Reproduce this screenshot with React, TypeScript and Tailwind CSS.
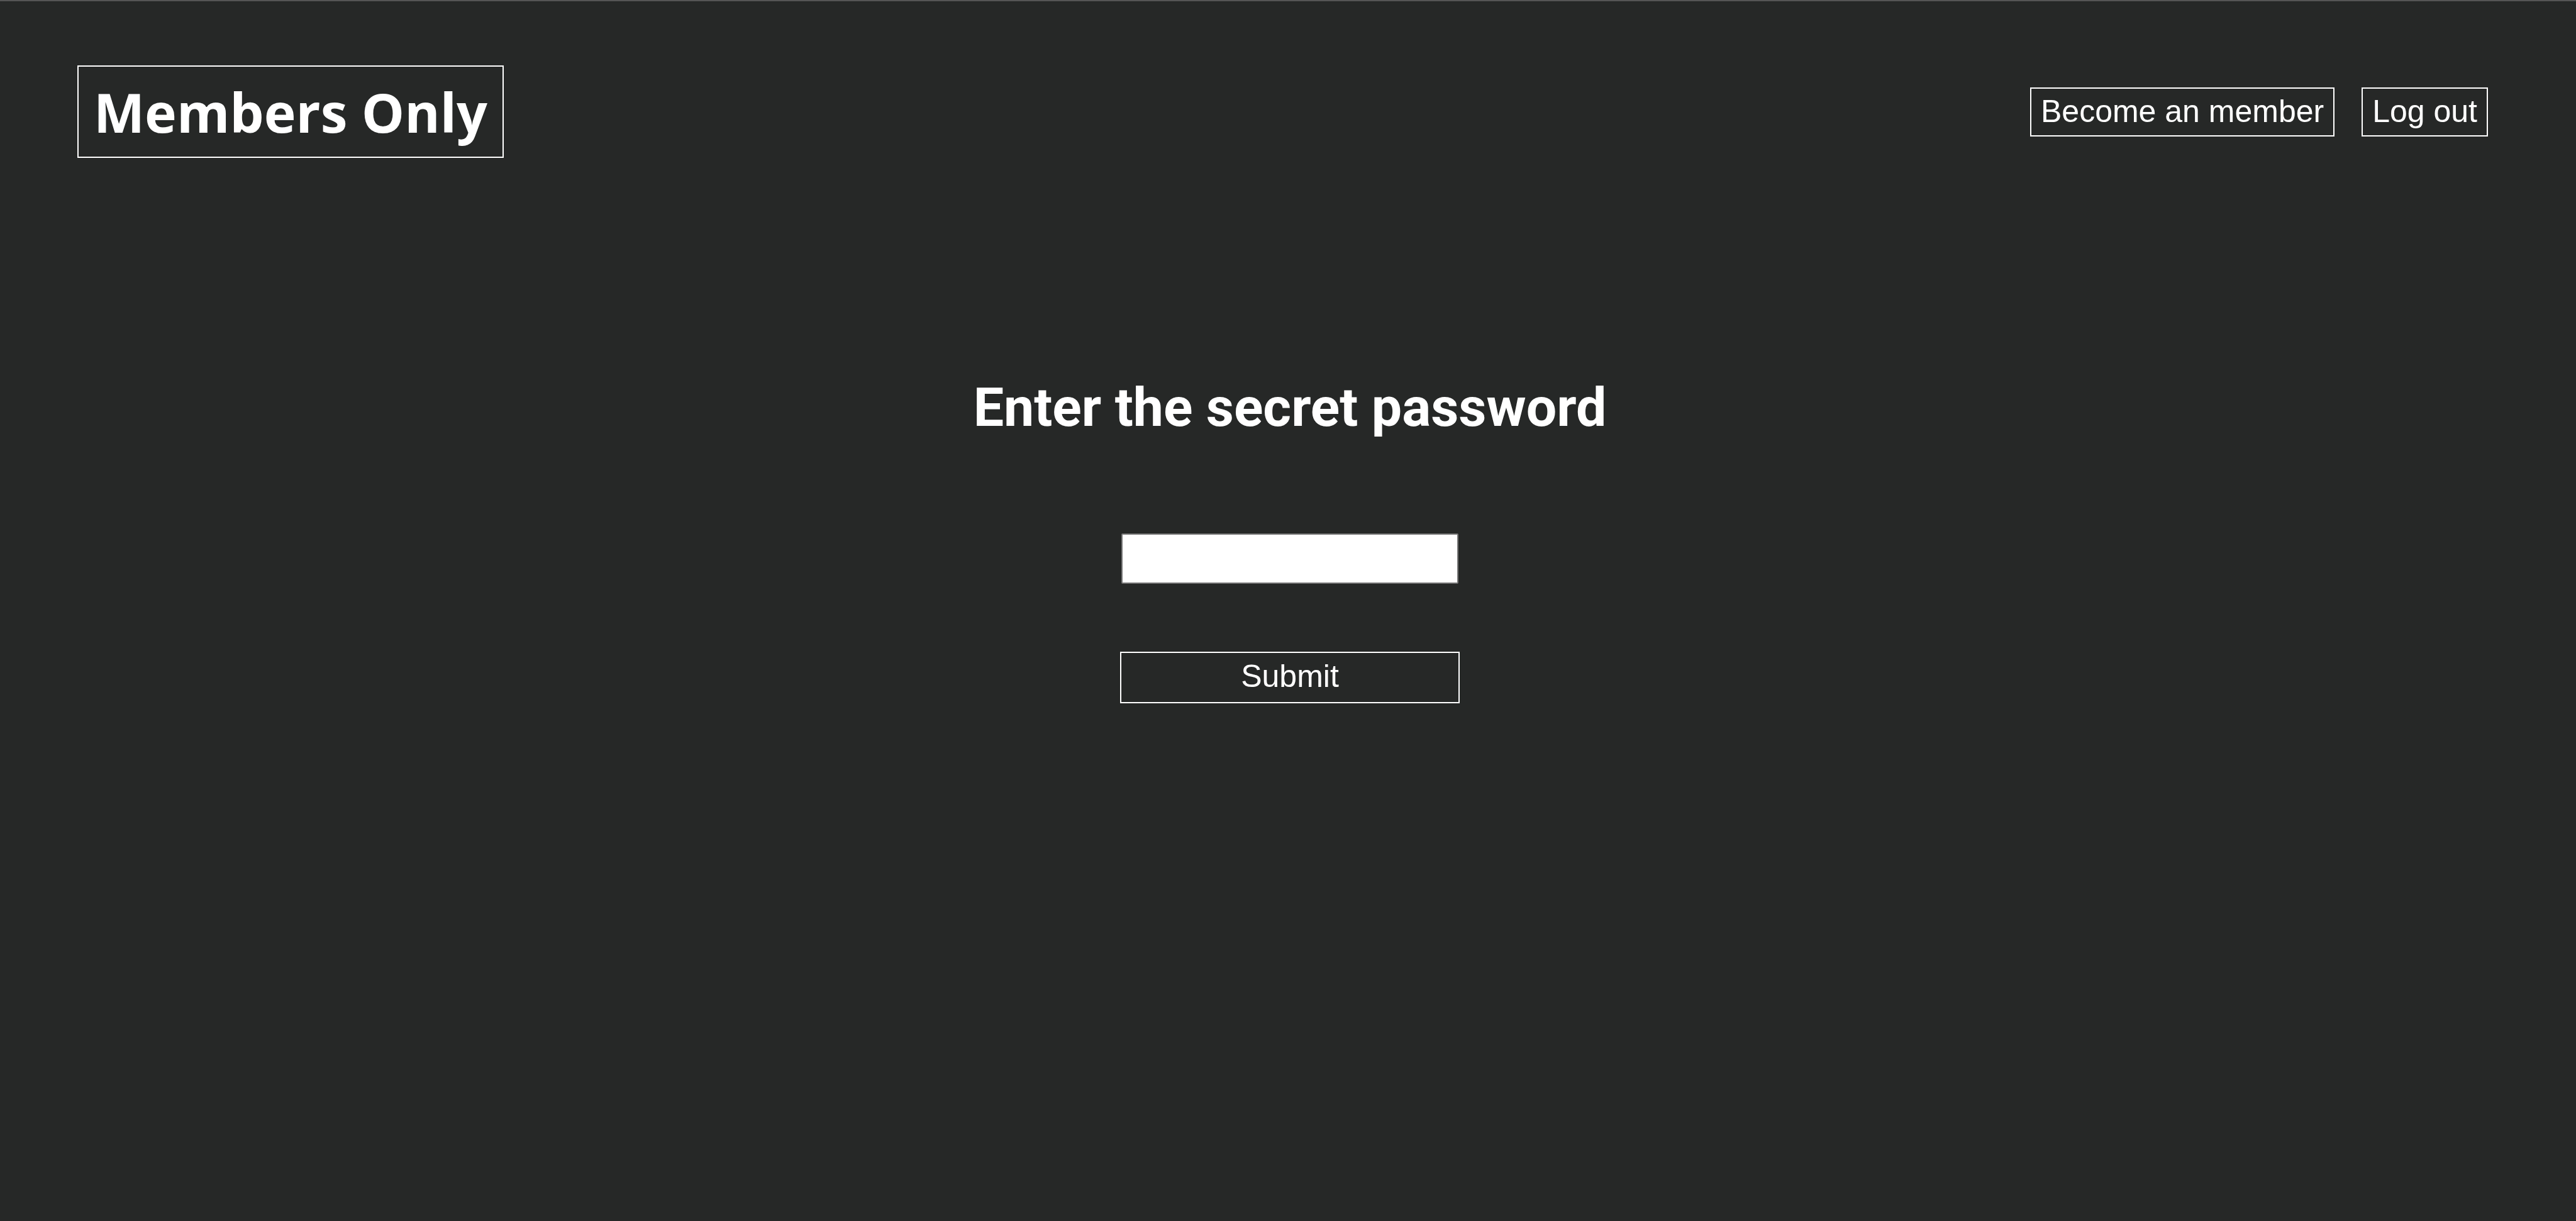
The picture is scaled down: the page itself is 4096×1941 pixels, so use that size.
import React from "react";

const navButton =
  "flex h-[78px] items-center border-2 border-white px-[15px] pb-0.5 text-[50px] leading-[60px] whitespace-nowrap";

function Header() {
  return (
    <header className="flex items-center justify-between pt-[102px] pr-[140px] pl-[123px]">
      <a
        href="#"
        className="flex h-[147px] items-center border-2 border-white px-6 font-['Open_Sans',sans-serif] text-[86px] leading-[118px] font-bold whitespace-nowrap"
      >
        Members Only
      </a>
      <nav className="flex gap-[43px]">
        <button type="button" className={navButton}>
          Become an member
        </button>
        <button type="button" className={navButton}>
          Log out
        </button>
      </nav>
    </header>
  );
}

function PasswordForm() {
  return (
    <form
      className="flex flex-col items-center pt-[150px]"
      onSubmit={(event) => event.preventDefault()}
    >
      <input
        type="password"
        name="password"
        aria-labelledby="password-heading"
        className="h-20 w-[536px] rounded-[2px] border-2 border-[#767676] bg-white px-1 text-[50px] text-black"
      />
      <button
        type="submit"
        className="mt-[108px] flex h-[82px] w-[540px] items-center justify-center border-2 border-white pb-1 text-[50px] leading-[60px]"
      >
        Submit
      </button>
    </form>
  );
}

export default function App() {
  return (
    <div className="min-h-screen border-t-2 border-[#555555] bg-[#262827] font-['Liberation_Sans',Arial,sans-serif] text-white">
      <Header />
      <main className="pt-[347px] pl-1.5">
        <h1
          id="password-heading"
          className="text-center font-[Roboto,sans-serif] text-[86px] leading-[100px] font-bold"
        >
          Enter the secret password
        </h1>
        <PasswordForm />
      </main>
    </div>
  );
}
